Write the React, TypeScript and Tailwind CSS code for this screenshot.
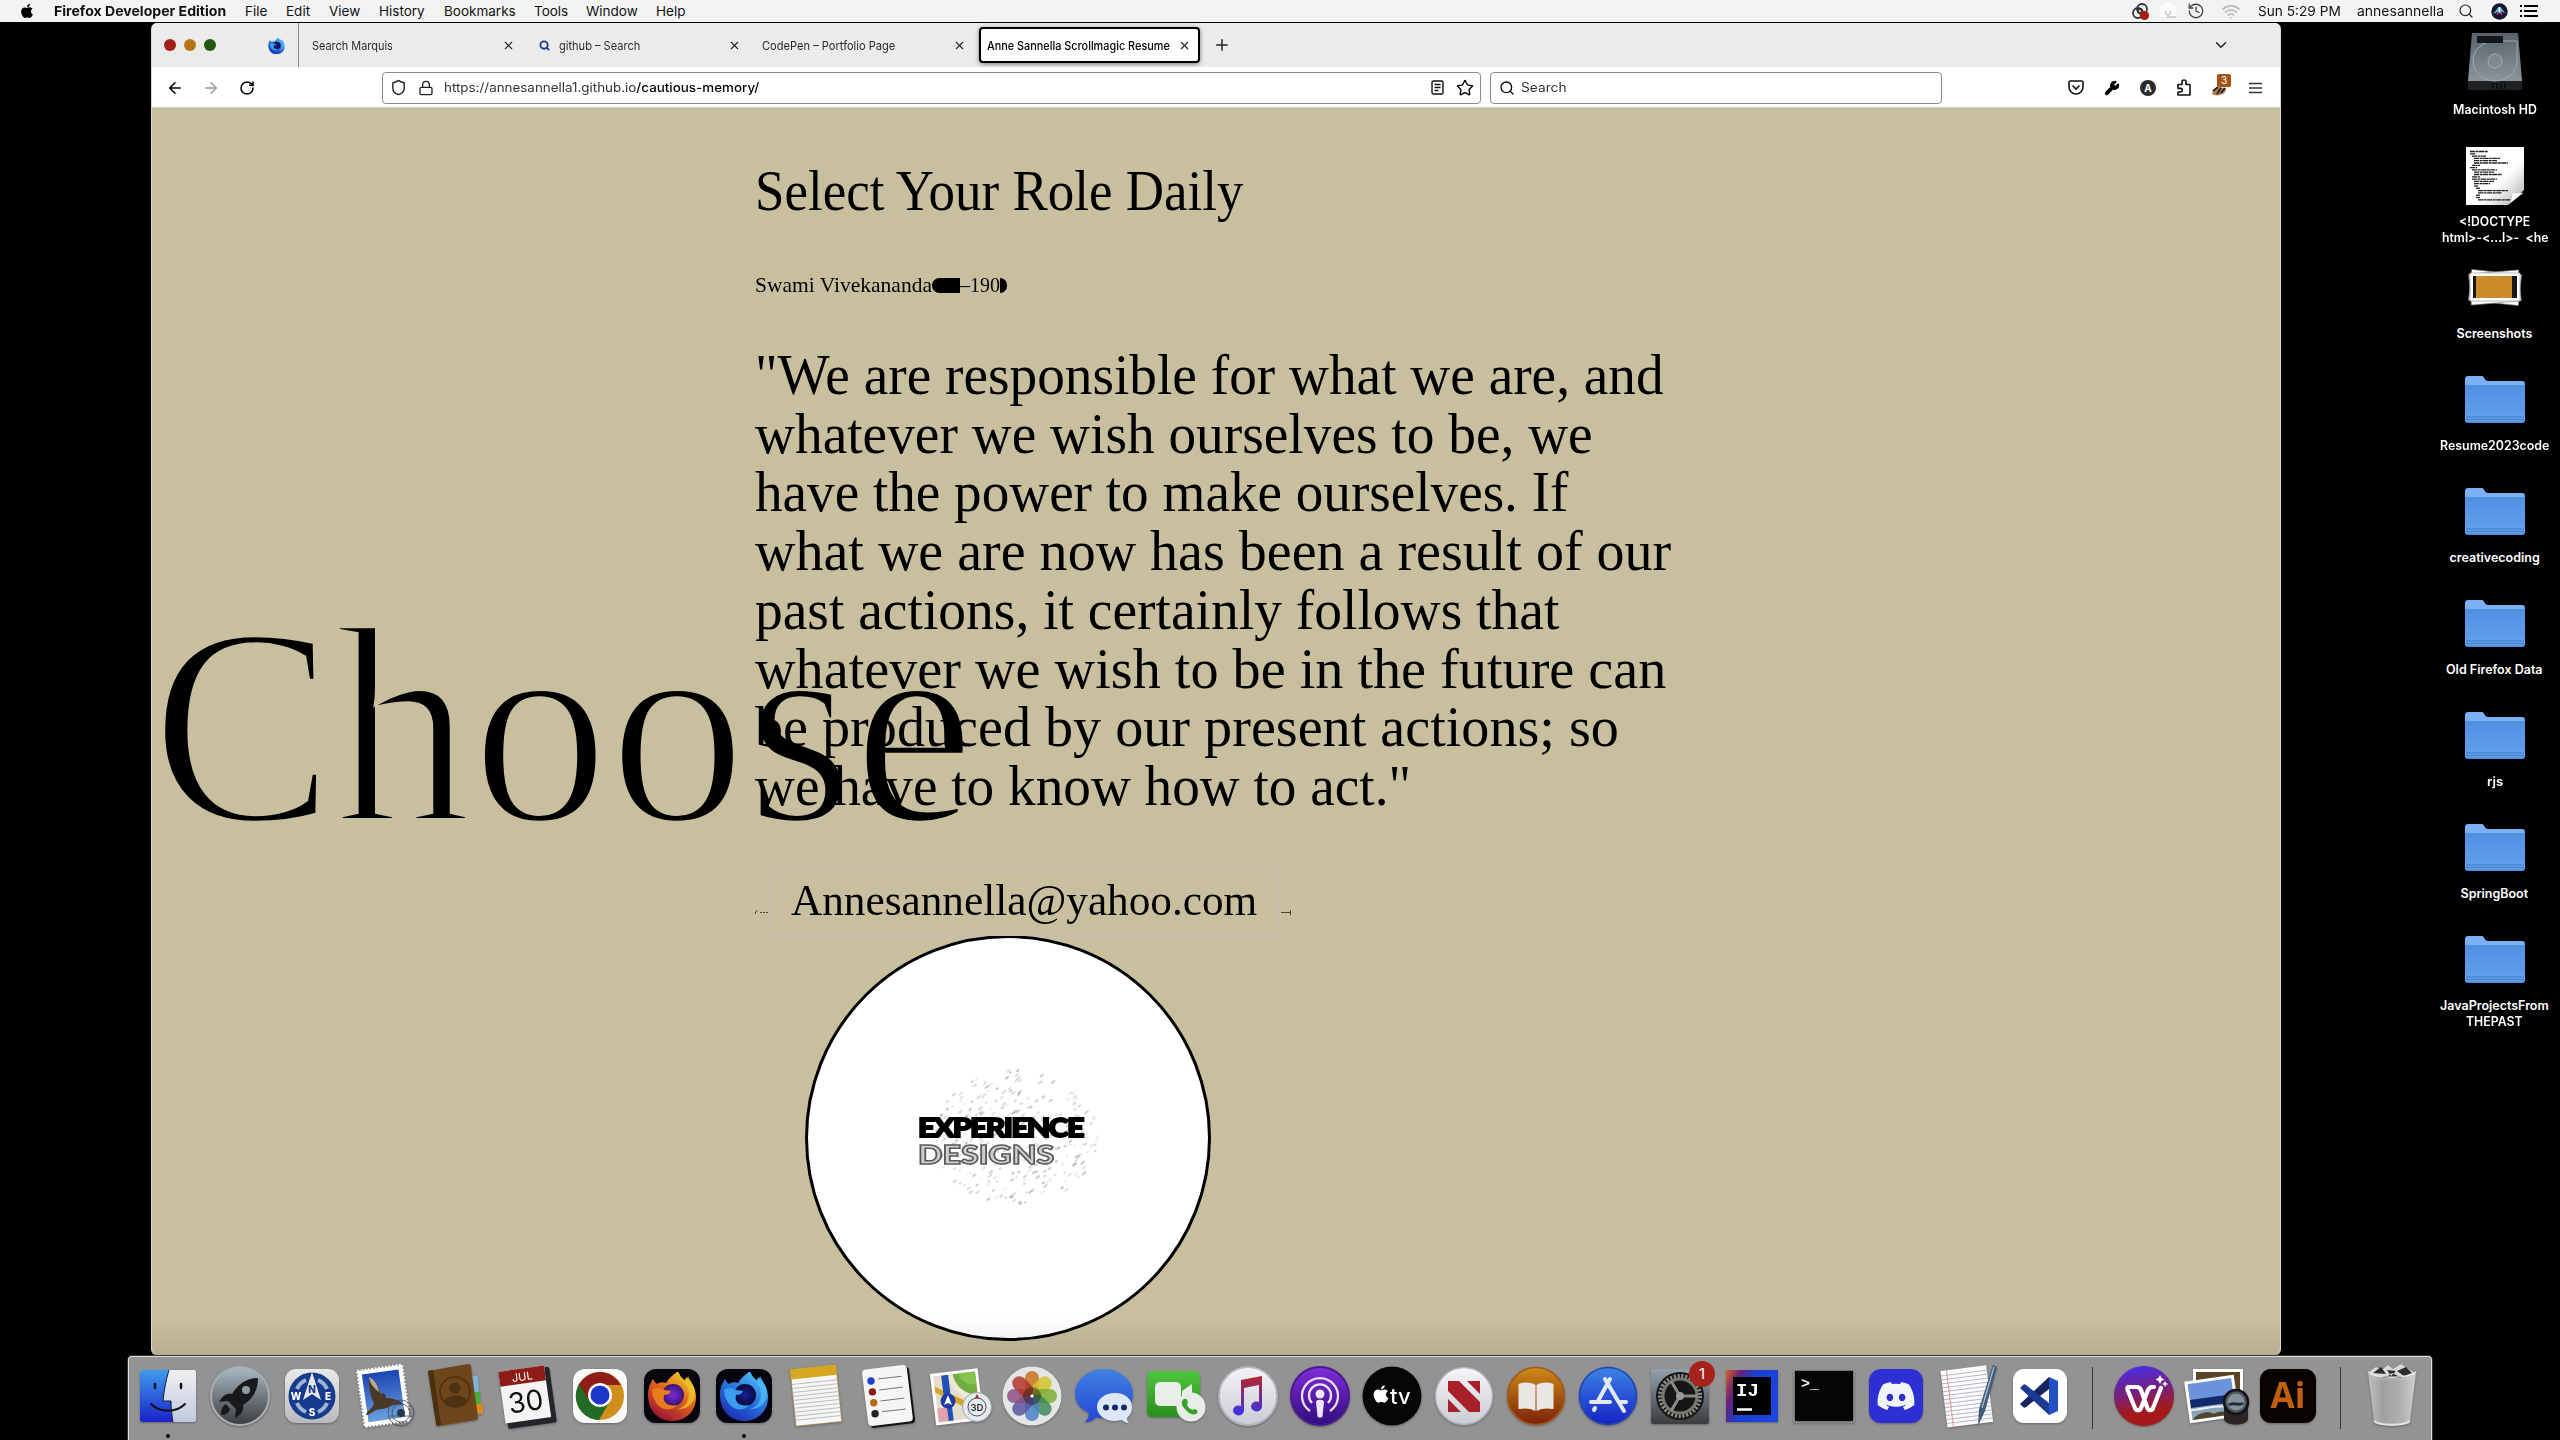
import React, { useLayoutEffect, useRef, useState } from "react";
import { FaApple, FaDiscord } from "react-icons/fa";
import {
  ArrowLeft,
  ArrowRight,
  ChevronDown,
  History,
  Lock,
  Plus,
  RotateCw,
  Search,
  Shield,
  Star,
  Wifi,
  Wrench,
  X,
} from "lucide-react";

/* Single line of text that is condensed or stretched to an exact width. */
function Fit({ w, className = "", children }: { w: number; className?: string; children: React.ReactNode }) {
  const ref = useRef<HTMLSpanElement>(null);
  const [scale, setScale] = useState(1);
  useLayoutEffect(() => {
    if (ref.current && ref.current.offsetWidth) setScale(w / ref.current.offsetWidth);
  }, [w]);
  return (
    <span className={`block shrink-0 whitespace-nowrap ${className}`} style={{ width: w }}>
      <span ref={ref} className="inline-block origin-left" style={{ transform: `scaleX(${scale})` }}>
        {children}
      </span>
    </span>
  );
}

function rng(seed: number) {
  let s = seed;
  return () => {
    s = (s * 16807) % 2147483647;
    return s / 2147483647;
  };
}

const MENU: [string, number, string][] = [
  ["File", 22, "ml-[19px]"],
  ["Edit", 24, "ml-[19px]"],
  ["View", 31, "ml-[19px]"],
  ["History", 46, "ml-[19px]"],
  ["Bookmarks", 72, "ml-[19px]"],
  ["Tools", 34, "ml-[18px]"],
  ["Window", 52, "ml-[18px]"],
  ["Help", 29, "ml-[18px]"],
];

function MenuBar() {
  return (
    <header className="flex h-[22px] items-center bg-[#f3f3f3] text-[13.5px] leading-[22px] text-[#111]">
      <FaApple className="ml-[19px] h-[16px] w-[16px] shrink-0 text-black" />
      <Fit w={172} className="ml-[19px] font-bold">Firefox Developer Edition</Fit>
      {MENU.map(([t, w, m]) => (
        <Fit key={t} w={w} className={m}>{t}</Fit>
      ))}
      <div className="ml-auto flex items-center pr-[22px]">
        <svg className="h-[20px] w-[22px]" viewBox="0 0 22 20">
          <g fill="none" stroke="#333" strokeWidth="1.800">
            <circle cx="8" cy="12" r="5" />
            <circle cx="12" cy="8" r="5" />
            <circle cx="10" cy="10" r="2" />
          </g>
          <circle cx="14.500" cy="14.500" r="4.600" fill="#a81e10" />
        </svg>
        <svg className="ml-[6px] h-[18px] w-[20px]" viewBox="0 0 20 18">
          <path d="M2 15h16v-6a7 7 0 0 0-16 0z" fill="#fcfcfc" />
          <path d="M8 9a2.500 2.500 0 1 0 4 0M9 15h9" fill="none" stroke="#aaa" />
        </svg>
        <History className="ml-[9px] h-[18px] w-[18px] text-[#444]" strokeWidth={1.7} />
        <Wifi className="ml-[15px] h-[19px] w-[22px] text-[#bbb]" strokeWidth={2.2} />
        <Fit w={83} className="ml-[16px]">Sun 5:29 PM</Fit>
        <Fit w={87} className="ml-[16px]">annesannella</Fit>
        <Search className="ml-[14px] h-[16px] w-[16px] text-[#222]" strokeWidth={1.8} />
        <svg className="ml-[17px] h-[17px] w-[17px]" viewBox="0 0 17 17">
          <circle cx="8.500" cy="8.500" r="8.200" fill="#18152f" />
          <path d="M2 10c3-1 4-6 6.500-6S12 9 15 10c-3 0-4.500-2-6.500-2S5 11 2 10z" fill="#3fd0e8" />
          <path d="M5 12c2-1 2-6 3.500-6s2 5 3.500 6c-2 0-2-2-3.500-2S7 12 5 12z" fill="#e95fc0" />
          <path d="M8.500 4v5" stroke="#fff" strokeWidth="1.500" />
        </svg>
        <svg className="ml-[12px] h-[12px] w-[18px]" viewBox="0 0 18 12" stroke="#000" strokeWidth="2">
          <path d="M0 1h2M0 6h2M0 11h2M4 1h14M4 6h13M4 11h14" />
        </svg>
      </div>
    </header>
  );
}

function Flame({ blue = false }: { blue?: boolean }) {
  const id = blue ? "fxb" : "fxo";
  return (
    <>
      <defs>
        <linearGradient id={id} x1="0.900" y1="0" x2="0.300" y2="1">
          <stop offset="0" stopColor={blue ? "#56c8fb" : "#f6dc2c"} />
          <stop offset="0.500" stopColor={blue ? "#2a76e0" : "#e0641c"} />
          <stop offset="1" stopColor={blue ? "#1a2fb4" : "#9a1237"} />
        </linearGradient>
        <radialGradient id={id + "g"}>
          <stop offset="0" stopColor={blue ? "#1a1f9a" : "#7a2de0"} />
          <stop offset="1" stopColor={blue ? "#060a3a" : "#3a1470"} />
        </radialGradient>
      </defs>
      <path d="M8 31c0-7 2-11 5-16 1 2 2 4 4 5 3-2 6-2 9-1 3-5 7-8 11-11 2-1 2 3 4 6l3 3c1-1 2-2 2-4 6 6 10 12 10 20 0 14-10 24-24 24S8 46 8 31z" fill={`url(#${id})`} />
      <circle cx="33" cy="31" r="11" fill={`url(#${id}g)`} />
      <path d="M12 26c4-3 9-2 12 0l7 1c-1 3-4 4-7 4-2 8 5 12 13 10-4 6-15 6-20-1-3-4-5-9-5-14z" fill={blue ? "#3b9bf0" : "#e87d1e"} />
      <path d="M38 8c0 9 11 10 11 22 0 8-5 14-12 15 11 1 18-7 18-16 0-8-5-12-7-17-1 2-1 4-2 5-3-2-6-5-8-9z" fill={blue ? "#4db8f8" : "#edc52a"} opacity="0.800" />
    </>
  );
}

function TabTitle({ children, w, className = "" }: { children: React.ReactNode; w: number; className?: string }) {
  return <Fit w={w} className={`pt-[2px] text-[12px] leading-[16px] text-[#2b2b2b] ${className}`}>{children}</Fit>;
}

function TabBar() {
  const close = "h-[13px] w-[13px] shrink-0 text-[#222]";
  return (
    <div className="flex h-[44px] items-center bg-[#ebebeb]">
      <div className="ml-[12px] flex gap-[8px]">
        <span className="h-[12px] w-[12px] rounded-full bg-[#a51f18]" />
        <span className="h-[12px] w-[12px] rounded-full bg-[#b67713]" />
        <span className="h-[12px] w-[12px] rounded-full bg-[#20590f]" />
      </div>
      <svg className="ml-[52px] h-[17px] w-[17px]" viewBox="7 6 50 50"><Flame blue /></svg>
      <div className="ml-[13px] h-full w-px bg-[#8a8a8a]" />
      <TabTitle w={81} className="ml-[13px]">Search Marquis</TabTitle>
      <X className={`${close} ml-[109px]`} strokeWidth={2} />
      <Search className="ml-[24px] h-[11px] w-[11px] text-[#1d3a94]" strokeWidth={4} />
      <TabTitle w={81} className="ml-[9px]">github – Search</TabTitle>
      <X className={`${close} ml-[88px]`} strokeWidth={2} />
      <TabTitle w={133} className="ml-[21px]">CodePen – Portfolio Page</TabTitle>
      <X className={`${close} ml-[58px]`} strokeWidth={2} />
      <div className="ml-[13px] flex h-[36px] w-[221px] items-center rounded-[4px] border-2 border-black bg-white shadow-[0_1px_4px_rgba(0,0,0,0.5)]">
        <Fit w={183} className="ml-[6px] pt-[2px] text-[12px] leading-[16px] font-medium text-black">Anne Sannella Scrollmagic Resume</Fit>
        <X className={`${close} ml-[8px]`} strokeWidth={2} />
      </div>
      <Plus className="ml-[13px] h-[18px] w-[18px] text-[#222]" strokeWidth={1.9} />
      <ChevronDown className="mr-[50px] ml-auto h-[18px] w-[18px] text-[#222]" strokeWidth={2} />
    </div>
  );
}

function Toolbar() {
  return (
    <div className="flex h-[41px] items-center border-b border-[#cfcfd4] bg-white pt-px text-[12.5px] leading-[18px] text-[#333]">
      <ArrowLeft className="ml-[14px] h-[18px] w-[18px] text-black" strokeWidth={2} />
      <ArrowRight className="ml-[18px] h-[18px] w-[18px] text-[#9a9a9a]" strokeWidth={2} />
      <RotateCw className="ml-[19px] h-[16px] w-[16px] text-black" strokeWidth={2.3} />
      <div className="ml-[127px] flex h-[32px] w-[1099px] items-center rounded-[4px] border border-[#8a8a90]">
        <Shield className="ml-[7px] h-[17px] w-[17px] text-[#222]" strokeWidth={2} />
        <Lock className="ml-[11px] h-[16px] w-[16px] text-[#222]" strokeWidth={2} />
        <Fit w={315} className="ml-[10px]">
          https://annesannella1.github.io<span className="font-medium text-black">/cautious-memory/</span>
        </Fit>
        <svg className="ml-auto h-[15px] w-[13px]" viewBox="0 0 13 15" fill="none" stroke="#111" strokeWidth="1.400">
          <rect x="1" y="1" width="11" height="13" rx="1.500" />
          <path d="M3.500 4.500h6M3.500 7.500h6M3.500 10.500h4" />
        </svg>
        <Star className="mr-[6px] ml-[12px] h-[18px] w-[18px] text-black" strokeWidth={1.9} />
      </div>
      <div className="ml-[9px] flex h-[32px] w-[452px] items-center rounded-[4px] border border-[#8a8a90]">
        <Search className="ml-[8px] h-[16px] w-[16px] text-black" strokeWidth={2} />
        <Fit w={45} className="ml-[6px]">Search</Fit>
      </div>
      <div className="mr-[17px] ml-auto flex items-center">
        <svg className="h-[15px] w-[16px]" viewBox="0 0 16 15" fill="none" stroke="#111" strokeWidth="1.600">
          <path d="M1 2.500C1 1.700 1.500 1 2.300 1h11.400c.8 0 1.300.7 1.300 1.500V7a7 7 0 0 1-14 0z" />
          <path d="M4.500 5.500 8 9l3.500-3.500" />
        </svg>
        <Wrench className="ml-[20px] h-[16px] w-[16px] fill-black text-black" strokeWidth={1.6} />
        <span className="ml-[20px] flex h-[16px] w-[16px] items-center justify-center rounded-full bg-[#2a2a2a] text-[10px] font-bold text-white">A</span>
        <svg className="ml-[20px] h-[17px] w-[16px]" viewBox="0 0 16 17" fill="none" stroke="#111" strokeWidth="1.600" strokeLinejoin="round">
          <path d="M2 5.500h4V3a2 2 0 0 1 4 0v2.500h4V16H2v-3h2.500a1.800 1.800 0 0 0 0-3.600H2z" />
        </svg>
        <div className="relative ml-[19px] h-[18px] w-[20px]">
          <svg className="h-[18px] w-[20px]" viewBox="0 0 20 18">
            <path d="M1 15c1-4 3-6 6-7l8 1c0 4-2 6-6 7-3 1-6 0-8-1z" fill="#b07a4c" />
            <path d="M2 12 7 8M6 15l4-6M10 14l4-5" stroke="#222" strokeWidth="1.800" />
          </svg>
          <span className="absolute -top-[5px] left-[6px] h-[13px] w-[14px] rounded-[2px] bg-[#a35312] text-center text-[10px] leading-[13px] text-white">3</span>
        </div>
        <svg className="ml-[18px] h-[12px] w-[14px]" viewBox="0 0 14 12" stroke="#333" strokeWidth="1.300">
          <path d="M0 1.500h13M0 6h13M0 10.500h13" />
        </svg>
      </div>
    </div>
  );
}

const QUOTE: [string, number][] = [
  ['"We are responsible for what we are, and', 909],
  ["whatever we wish ourselves to be, we", 838],
  ["have the power to make ourselves. If", 813],
  ["what we are now has been a result of our", 916],
  ["past actions, it certainly follows that", 804],
  ["whatever we wish to be in the future can", 911],
  ["be produced by our present actions; so", 864],
  ['we have to know how to act."', 656],
];

function Logo() {
  const r = rng(77);
  const marks = Array.from({ length: 330 }, () => {
    const a = r() * Math.PI * 2;
    const d = Math.sqrt(r());
    return { x: 97 + Math.cos(a) * d * 82, y: 70 + Math.sin(a) * d * 67, l: 0.5 + r() * 2.5, o: 0.06 + r() * 0.22 };
  });
  return (
    <div className="relative ml-[4px] h-[140px] w-[184px]">
      <svg className="h-[140px] w-[184px]" viewBox="0 0 184 140">
        {marks.map((m, i) => (
          <path key={i} d={`M${m.x} ${m.y}l${m.l} ${-m.l * 0.8}`} stroke="#333" strokeOpacity={m.o} strokeWidth="2" strokeLinecap="round" />
        ))}
      </svg>
      <div className="absolute top-[46px] left-0 font-['Lato',sans-serif] text-[26px] leading-[27px] font-black">
        <Fit w={165} className="tracking-[-1.5px] text-black [-webkit-text-stroke:1.8px_#000]">EXPERIENCE</Fit>
        <Fit w={136} className="text-[#d0d0d0] [-webkit-text-stroke:1.500px_#5a5a5a]">DESIGNS</Fit>
      </div>
    </div>
  );
}

function Page() {
  return (
    <main className="relative flex-1 overflow-hidden bg-[#c8bf9f] pt-[54px] pl-[603px] font-['Liberation_Serif',serif] text-black">
      <div className="absolute top-[479px] -left-[1px] text-[282px] leading-[278px] [-webkit-text-stroke:6px_#c8bf9f]">
        <Fit w={824}>Choose</Fit>
      </div>
      <div className="relative">
        <h1 className="text-[56px] leading-[59px]"><Fit w={488}>Select Your Role Daily</Fit></h1>
        <div className="mt-[52px] flex h-[24px] text-[22px] leading-[24px]">
          <Fit w={177}>Swami Vivekananda</Fit>
          <span className="mt-[5px] h-[15px] w-[28px] rounded-l-full bg-black text-[11px] leading-[15px]">(1863</span>
          <Fit w={40}>–190</Fit>
          <span className="mt-[5px] h-[15px] w-[7px] rounded-r-full bg-black text-[11px] leading-[15px]">)</span>
        </div>
        <blockquote className="mt-[49px] text-[57px] leading-[58.7px]">
          {QUOTE.map(([t, w]) => <Fit key={t} w={w}>{t}</Fit>)}
        </blockquote>
        <div className="mt-[51px] flex h-[69px] items-center">
          <svg className="mt-[22px] h-[6px] w-[15px]" viewBox="0 0 15 6" stroke="#4a4738" fill="none"><path d="M.5 5V2h3M5 3.500h8" strokeDasharray="2 1" /></svg>
          <div className="flex h-[69px] w-[509px] items-center border border-[#bcbab4] pl-[20px]">
            <Fit w={466} className="text-[44px] leading-[60px]">Annesannella@yahoo.com</Fit>
          </div>
          <svg className="mt-[22px] ml-[2px] h-[6px] w-[11px]" viewBox="0 0 11 6" stroke="#4a4738" fill="none"><path d="M0 3.500h9M9.500 1v5" /></svg>
        </div>
        <div className="-mt-px ml-[50px] flex h-[406px] w-[406px] items-center justify-center rounded-full border-3 border-black bg-white">
          <Logo />
        </div>
      </div>
      <div className="absolute inset-x-0 bottom-0 h-[40px] bg-linear-to-b from-transparent to-black/8" />
    </main>
  );
}

function HardDrive() {
  return (
    <svg className="h-[58px] w-[58px]" viewBox="0 0 58 58">
      <defs>
        <linearGradient id="hd" x1="0" y1="0" x2="0" y2="1"><stop offset="0" stopColor="#58626a" /><stop offset="1" stopColor="#8c959a" /></linearGradient>
      </defs>
      <path d="M6 1h46l4 48v7c0 1-1 2-2 2H4c-1 0-2-1-2-2v-7z" fill="#202224" />
      <path d="M6 1h46l4 48H2z" fill="url(#hd)" />
      <path d="M29 9h22v20a22 20 0 1 1-22-20z" fill="none" stroke="#a0a9ae" />
      <circle cx="29" cy="29" r="7" fill="#7f898f" stroke="#a2acb1" />
      <rect x="11" y="4" width="26" height="7" fill="#15181a" />
      <path d="M27 51v6M31 51v6M35 51v6M39 51v6" stroke="#000" />
    </svg>
  );
}

function DocIcon() {
  const lines: [number, number][] = [[4, 18], [4, 6], [6, 14], [8, 26], [8, 23], [8, 34], [6, 8], [4, 7], [6, 25], [8, 20], [8, 28], [6, 8], [6, 25], [8, 20], [8, 16], [8, 4], [10, 4], [12, 30], [12, 24], [10, 4], [10, 4], [12, 34]];
  return (
    <svg className="mt-[6px] h-[58px] w-[58px]" viewBox="0 0 58 58">
      <defs><linearGradient id="dc" x1="0" y1="0" x2="1" y2="1"><stop offset="0.600" stopColor="#fff" /><stop offset="1" stopColor="#aaa" /></linearGradient></defs>
      <path d="M0 0h58v43L42 58H0z" fill="url(#dc)" />
      {lines.map(([x, w], i) => <path key={i} d={`M${x} ${4.500 + i * 2.300}h${w}`} stroke="#222" strokeWidth="1.300" strokeDasharray="5 .6 3 .5" />)}
      <path d="M46 46h11L43 57c2-3 3-6 3-11z" fill="#fff" stroke="#bbb" strokeWidth=".5" />
    </svg>
  );
}

function ShotsIcon() {
  return (
    <svg className="mt-[6px] h-[40px] w-[58px]" viewBox="0 0 58 40">
      <rect x="4" y="4" width="50" height="31" fill="#fff" stroke="#888" strokeWidth=".6" transform="rotate(6 29 20)" />
      <rect x="4" y="4" width="50" height="31" fill="#fff" stroke="#888" strokeWidth=".6" transform="rotate(-5 29 20)" />
      <rect x="4" y="5" width="50" height="28" fill="#fff" stroke="#888" strokeWidth=".6" />
      <rect x="7" y="8" width="44" height="22" fill="#151515" />
      <rect x="10" y="8" width="36" height="22" fill="#cd8c2b" />
    </svg>
  );
}

function Folder() {
  return (
    <svg className="mt-[6px] h-[48px] w-[60px]" viewBox="0 0 60 48">
      <defs><linearGradient id="fd" x1="0" y1="0" x2="0" y2="1"><stop offset="0" stopColor="#4f8ee2" /><stop offset="1" stopColor="#66a4f0" /></linearGradient></defs>
      <path d="M0 3c0-2 1-3 3-3h14c2 0 3 5 6 5h34c2 0 3 1 3 3v10H0z" fill="#7cb0f4" />
      <path d="M0 9h60v35c0 2-1 3-3 3H3c-2 0-3-1-3-3z" fill="url(#fd)" />
      <path d="M1 41h58M1 43.500h58M1 46h58" stroke="#3d78c6" strokeWidth=".9" />
    </svg>
  );
}

const FILES: { icon: React.ReactNode; lines: [string, number][] }[] = [
  { icon: <HardDrive />, lines: [["Macintosh HD", 84]] },
  { icon: <DocIcon />, lines: [["<!DOCTYPE", 71], ["html>-<...l>-  <he", 106]] },
  { icon: <ShotsIcon />, lines: [["Screenshots", 76]] },
  { icon: <Folder />, lines: [["Resume2023code", 109]] },
  { icon: <Folder />, lines: [["creativecoding", 90]] },
  { icon: <Folder />, lines: [["Old Firefox Data", 97]] },
  { icon: <Folder />, lines: [["rjs", 16]] },
  { icon: <Folder />, lines: [["SpringBoot", 68]] },
  { icon: <Folder />, lines: [["JavaProjectsFrom", 109], ["THEPAST", 57]] },
];

function Desktop() {
  return (
    <aside className="flex w-[131px] flex-col pt-[7px]">
      {FILES.map((f, i) => (
        <div key={i} className="flex h-[112px] flex-col items-center">
          <div className="flex h-[64px] items-center justify-center">{f.icon}</div>
          <div className="mt-[9px] flex flex-col items-center text-[12.5px] leading-[16px] font-semibold text-white">
            {f.lines.map(([t, w]) => <Fit key={t} w={w} className="whitespace-pre">{t}</Fit>)}
          </div>
        </div>
      ))}
    </aside>
  );
}

function Grad({ id, a, b }: { id: string; a: string; b: string }) {
  return <linearGradient id={id} x1="0" y1="0" x2="0" y2="1"><stop offset="0" stopColor={a} /><stop offset="1" stopColor={b} /></linearGradient>;
}

const INTER = "Inter, sans-serif";

const APPS: React.ReactNode[] = [
  /* Finder */
  <g key="finder">
    <Grad id="fi" a="#3f9bec" b="#1a22cc" /><Grad id="fi2" a="#f0f0f2" b="#bfc8de" />
    <rect x="4" y="6" width="56" height="52" rx="2" fill="url(#fi2)" />
    <path d="M6 6h27c-3 10-5 20-6 31h8c0 8 1 15 2 21H6c-1 0-2-1-2-2V8c0-1 1-2 2-2z" fill="url(#fi)" />
    <path d="M33 6c-3 10-5 20-6 31h8c0 8 1 15 2 21" fill="none" stroke="#123" strokeWidth="1" />
    <path d="M19 20v4M45 20v4" stroke="#111" strokeWidth="2.500" strokeLinecap="round" />
    <path d="M15 40c9 9 25 9 34 0" fill="none" stroke="#111" strokeWidth="2" strokeLinecap="round" />
  </g>,
  /* Launchpad */
  <g key="launch">
    <Grad id="la" a="#a9bac4" b="#3a3c3e" />
    <circle cx="32" cy="32" r="29" fill="url(#la)" stroke="#a7afb4" strokeWidth="2" />
    <path d="M50 14c-11 0-20 6-26 16-5-1-9 1-13 8l9-1 8 8-1 9c7-4 9-8 8-13 10-6 15-15 15-27z" fill="#17191b" />
    <path d="M18 40c-4 2-5 6-5 11 5 0 8-2 9-6z" fill="#17191b" />
    <circle cx="38" cy="26" r="4" fill="#8e9aa1" />
  </g>,
  /* Compass */
  <g key="compass">
    <Grad id="co" a="#e9e9ea" b="#b9b9bb" />
    <rect x="5" y="5" width="54" height="54" rx="11" fill="url(#co)" />
    <circle cx="32" cy="32" r="23.500" fill="#173b8c" />
    <g fill="none" stroke="#9db3d6" strokeWidth="4">
      <path d="M38 16a17 17 0 0 1 9 9M47 39a17 17 0 0 1-9 9M26 48a17 17 0 0 1-9-9M17 25a17 17 0 0 1 9-9" />
    </g>
    <path d="M32 8 23 36l9-6 9 6z" fill="#e8e8e8" />
    <g fontFamily={INTER} fontWeight="800" fontSize="10" textAnchor="middle" fill="#fff">
      <text x="32" y="29" fill="#173b8c">N</text><text x="16" y="36">W</text><text x="48" y="36">E</text><text x="32" y="52">S</text>
    </g>
  </g>,
  /* Mail stamp */
  <g key="mail">
    <g transform="rotate(-8 30 32)">
      <rect x="9" y="4" width="45" height="56" fill="#fff" stroke="#fff" strokeWidth="2.500" strokeDasharray="2 1.500" />
      <Grad id="ma" a="#1c45b4" b="#6ba0dd" />
      <rect x="13" y="8" width="37" height="48" fill="url(#ma)" />
    </g>
    <path d="M17 13c6 2 10 9 11 17 4-2 6 0 6 4 7 0 14 2 18 7-6-2-10 0-14 1-4 4-12 2-16 5-3 2-5 4-8 4 1-5 7-6 8-12-4-8-5-14-5-26z" fill="#4b3926" />
    <path d="M17 13c5 2 9 8 10 15-5-4-9-8-10-15z" fill="#b7aa98" />
    <g fill="none" stroke="#444a5a" opacity=".8"><circle cx="49" cy="49" r="13" /><circle cx="49" cy="49" r="9" /><path d="M38 52h22" /></g>
    <circle cx="49" cy="49" r="4" fill="#2a3448" />
  </g>,
  /* Contacts */
  <g key="contacts">
    <path d="M48 12h6l2 34-6 2z" fill="#7fb5d8" /><path d="M50 28h6v12h-6z" fill="#48a83c" /><path d="M51 40h8v10h-8z" fill="#d98920" />
    <path d="M4 7 44 0c2 0 3 1 3 3l7 50c0 2-1 3-2 3l-37 6c-2 0-3-1-3-3z" fill="#6d471b" />
    <path d="M4 7 9 6l8 55-3 1c-2 0-2-1-2-3z" fill="#4b2f10" />
    <circle cx="31" cy="28" r="15" fill="none" stroke="#4c3212" strokeWidth="1.500" />
    <circle cx="31" cy="24" r="5.500" fill="#4c3212" /><path d="M20 38c2-8 20-9 23-1-5 7-17 8-23 1z" fill="#4c3212" />
  </g>,
  /* Calendar */
  <g key="cal" transform="rotate(-8 32 32)">
    <rect x="8" y="6" width="49" height="56" rx="2" fill="#22262a" />
    <rect x="6" y="4" width="46" height="52" fill="#f4f4f4" />
    <rect x="6" y="4" width="46" height="15" fill="#8e1c16" />
    <g fontFamily={INTER} textAnchor="middle"><text x="29" y="16" fontSize="11" fill="#fff">JUL</text><text x="29" y="47" fontSize="28" fill="#111">30</text></g>
  </g>,
  /* Chrome */
  <g key="chrome">
    <rect x="5" y="5" width="54" height="54" rx="12" fill="#fafafa" />
    <circle cx="32" cy="32" r="24" fill="#d08e1c" />
    <path d="M32 32 11 20a24 24 0 0 0 20 36l11-19z" fill="#226a26" />
    <path d="M11 20a24 24 0 0 1 42 1H32L22 38z" fill="#8f1e17" />
    <circle cx="32" cy="31" r="12" fill="#fff" /><circle cx="32" cy="31" r="9.500" fill="#1d35c9" />
  </g>,
  <g key="ff"><rect x="4" y="5" width="56" height="54" rx="12" fill="#08050f" /><Flame /></g>,
  <g key="ffd"><rect x="4" y="5" width="56" height="54" rx="12" fill="#050510" /><Flame blue /></g>,
  /* Notes */
  <g key="notes" transform="rotate(-6 32 32)">
    <rect x="9" y="3" width="46" height="57" fill="#f6f6f6" stroke="#9a7e2a" strokeWidth=".6" />
    <rect x="9" y="3" width="46" height="10" fill="#d5a61f" />
    <path d="M9 18h46M9 22h46M9 26h46M9 30h46M9 34h46M9 38h46M9 42h46M9 46h46M9 50h46M9 54h46" stroke="#bbb" />
  </g>,
  /* Reminders */
  <g key="rem" transform="rotate(-7 32 32)">
    <rect x="11" y="5" width="45" height="57" rx="4" fill="#111" /><rect x="9" y="3" width="45" height="57" rx="4" fill="#f5f5f5" />
    <circle cx="17" cy="15" r="3.700" fill="#213fd0" /><circle cx="17" cy="26" r="3.700" fill="#8a1f1a" /><circle cx="17" cy="37" r="3.700" fill="#b56a18" /><circle cx="17" cy="48" r="3.700" fill="#222" />
    <path d="M24 14h24M24 25h24M24 36h24M24 47h24" stroke="#777" />
  </g>,
  /* Maps */
  <g key="maps">
    <g transform="rotate(-7 28 34)">
      <rect x="5" y="7" width="48" height="52" fill="#fff" /><rect x="8" y="10" width="42" height="46" fill="#e4ddcb" />
      <path d="M25 10h25v26C36 34 26 24 25 10z" fill="#6fae3f" /><path d="M33 10h17v13c-9 0-15-5-17-13z" fill="#86c44f" />
      <path d="M25 10c1 14 11 24 25 26" fill="none" stroke="#efe9da" strokeWidth="5" />
      <path d="M8 26l42 28v-8L8 20z" fill="#d9a32a" /><path d="M16 10h7v46h-7z" fill="#2350b5" /><path d="M8 42h10v14H8z" fill="#e0a3ac" />
    </g>
    <circle cx="20" cy="37" r="7.500" fill="#1d3ba5" /><path d="m20 31-4 10 4-2 4 2z" fill="#fff" />
    <circle cx="49" cy="43" r="14.500" fill="#e6e9ec" stroke="#9aa" /><circle cx="49" cy="43" r="9" fill="none" stroke="#35566f" />
    <text x="49" y="46.500" fontFamily={INTER} fontSize="9.500" fontWeight="600" textAnchor="middle" fill="#222">3D</text><path d="m49 30-2 4h4z" fill="#a22" />
  </g>,
  /* Photos */
  <g key="photos">
    <circle cx="32" cy="32" r="29.500" fill="#e4e6e6" />
    {["#c9701f", "#d3c32c", "#7fae35", "#3f8a54", "#4b7fc4", "#5b55a0", "#8c4f82", "#b0362a"].map((c, i) => (
      <rect key={c} x="25" y="7" width="14" height="24" rx="7" fill={c} opacity=".85" transform={`rotate(${i * 45} 32 32)`} />
    ))}
    <circle cx="32" cy="32" r="9" fill="#26201c" opacity=".45" /><circle cx="32" cy="32" r="1.600" fill="#fff" />
  </g>,
  /* Messages */
  <g key="msg">
    <Grad id="ms" a="#4580e2" b="#2147d6" />
    <path d="M32 5c16 0 29 11 29 25S48 54 32 54c-3 0-6 0-8-1-2 3-6 5-11 5 3-3 4-6 4-9C8 45 3 38 3 30 3 16 16 5 32 5z" fill="url(#ms)" />
    <path d="M43 29c10 0 17 6 17 14 0 5-2 8-5 11 0 2 1 4 2 5-3 0-5-1-7-3l-7 1c-10 0-18-6-18-14s8-14 18-14z" fill="#dce8f8" />
    <g fill="#142a66"><circle cx="34" cy="43.500" r="3" /><circle cx="43" cy="43.500" r="3" /><circle cx="52" cy="43.500" r="3" /></g>
  </g>,
  /* FaceTime */
  <g key="ft">
    <Grad id="ft" a="#4fc43f" b="#2b8f1d" />
    <rect x="3" y="7" width="53" height="46" rx="5" fill="url(#ft)" /><rect x="11" y="18" width="26" height="24" rx="5" fill="#e9eee8" /><path d="m38 27 10-7v20l-10-7z" fill="#e9eee8" />
    <circle cx="47" cy="43" r="14.500" fill="#e6ece6" />
    <path d="M40 35c2-1 3 0 4 3l-1 3c1 2 3 4 5 5l3-1c3 1 3 3 2 4-3 3-8 1-12-4-4-4-4-8-1-10z" fill="#37a026" />
  </g>,
  /* Music */
  <g key="music">
    <Grad id="mu" a="#f4f4f6" b="#c8ccd4" />
    <defs><linearGradient id="mn" gradientUnits="userSpaceOnUse" x1="0" y1="12" x2="0" y2="50"><stop offset="0" stopColor="#b8242a" /><stop offset=".5" stopColor="#7a2c80" /><stop offset="1" stopColor="#3f30e8" /></linearGradient></defs>
    <circle cx="32" cy="32" r="29" fill="url(#mu)" stroke="#b3b6bf" strokeWidth="2" />
    <path d="M25 16l21-4v31a5.500 5 0 1 1-3-5V21l-15 3v23a5.500 5 0 1 1-3-5z" fill="url(#mn)" />
  </g>,
  /* Podcasts */
  <g key="pod">
    <Grad id="po" a="#7f2cd8" b="#320e7c" />
    <circle cx="32" cy="32" r="29" fill="url(#po)" stroke="#4a1a90" strokeWidth="2" />
    <g fill="none" stroke="#e9def6" strokeWidth="2.300"><path d="M22 47a18 18 0 1 1 20 0" /><path d="M24 39a11 11 0 1 1 16 0" /></g>
    <circle cx="32" cy="30" r="4.500" fill="#efe6fa" /><path d="M28 38c0-3 8-3 8 0l-1.500 14c0 2-5 2-5 0z" fill="#efe6fa" />
  </g>,
  /* TV */
  <g key="tv">
    <circle cx="32" cy="32" r="29.500" fill="#060606" /><FaApple x={11} y={20} size={20} color="#fff" />
    <text x="30" y="40" fontFamily={INTER} fontSize="22" fontWeight="500" fill="#fff">tv</text>
  </g>,
  /* News */
  <g key="news">
    <Grad id="ne" a="#f6f6f8" b="#c9ccd4" /><circle cx="32" cy="32" r="28.500" fill="url(#ne)" stroke="#aeb2bb" strokeWidth="1.500" />
    <path d="M16 17h11l21 21v10H37L16 27zM35 17h13v13zM16 35l13 13H16z" fill="#a92029" />
  </g>,
  /* Books */
  <g key="books">
    <Grad id="bo" a="#cd8a18" b="#7d2108" /><circle cx="32" cy="32" r="28.500" fill="url(#bo)" stroke="#a5561a" strokeWidth="1.500" />
    <path d="M31.500 21c-5-3-11-3-17-1v25c6-1 12-1 17 2zM32.500 21c5-3 11-3 17-1v25c-6-1-12-1-17 2z" fill="#e9e7e4" />
  </g>,
  /* App Store */
  <g key="store">
    <Grad id="as" a="#3b84e6" b="#1722c4" /><circle cx="32" cy="32" r="28.500" fill="url(#as)" stroke="#2145b4" strokeWidth="1.500" />
    <g stroke="#e2e9f4" strokeWidth="4" strokeLinecap="round"><path d="M34 15 22 37M29 15l19 32M15 38h19M44 38h6M19 44l-1 2" /></g>
  </g>,
  /* System settings */
  <g key="sys">
    <Grad id="sy" a="#93a2ae" b="#3b3c3d" /><rect x="3" y="5" width="58" height="55" rx="2" fill="url(#sy)" />
    <circle cx="32" cy="32" r="24" fill="#161616" /><circle cx="32" cy="32" r="20" fill="none" stroke="#8b8b86" strokeWidth="4" strokeDasharray="2.200 1.600" />
    <circle cx="32" cy="32" r="17" fill="none" stroke="#77776f" strokeWidth="3" />
    <path d="M32 32h17M32 32l-9-15M32 32l-9 15" stroke="#8b8b86" strokeWidth="3" /><circle cx="32" cy="32" r="4" fill="#999" />
  </g>,
  /* IntelliJ */
  <g key="ij">
    <defs><linearGradient id="ij" x1="0" y1="0" x2="1" y2=".4"><stop offset="0" stopColor="#d8631f" /><stop offset=".25" stopColor="#6a1f78" /><stop offset=".5" stopColor="#1a3fd0" /><stop offset="1" stopColor="#1b45e0" /></linearGradient></defs>
    <rect x="6" y="6" width="52" height="52" fill="url(#ij)" /><rect x="13" y="13" width="38" height="38" fill="#000" />
    <text x="16" y="32" fontFamily="Liberation Mono, monospace" fontWeight="700" fontSize="19" fill="#fff">IJ</text><path d="M17 45.500h15" stroke="#fff" strokeWidth="2.500" />
  </g>,
  /* Terminal */
  <g key="term">
    <rect x="2" y="6" width="60" height="52" rx="2" fill="#050505" stroke="#8e969c" strokeWidth="1.500" />
    <text x="9" y="24" fontFamily="Liberation Mono, monospace" fontWeight="700" fontSize="15" fill="#eee">{">_"}</text>
  </g>,
  /* Discord */
  <g key="disc"><rect x="5" y="5" width="54" height="54" rx="12" fill="#2d2fd2" /><FaDiscord x={12} y={12} size={40} color="#f2f4fb" /></g>,
  /* TextEdit */
  <g key="te">
    <g transform="rotate(-7 30 34)"><rect x="8" y="4" width="46" height="57" fill="#fafafa" /><path d="M8 9h46M8 13h46M8 17h46M8 21h46M8 25h46M8 29h46M8 33h46M8 37h46M8 41h46M8 45h46M8 49h46M8 53h46M8 57h46" stroke="#aab" strokeWidth=".8" /><path d="M14 4v57" stroke="#d88" strokeWidth=".8" /></g>
    <path d="M57 1l4 2-12 44-7 15 1-17z" fill="#3f5b78" /><path d="M58 3 46 44" stroke="#a9c0d4" strokeWidth="1.300" />
  </g>,
  /* VS Code */
  <g key="vsc">
    <rect x="5" y="5" width="54" height="54" rx="11" fill="#fff" />
    <path d="M12 40 41 13v12L18 43c-1 1-2 1-3 0l-3-3z" fill="#14245e" /><path d="M12 24l3-3c1-1 2-1 3 0l23 18v12z" fill="#1c3a92" /><path d="m41 13 9 4v30l-9 4z" fill="#2450c4" />
  </g>,
];

const EXTRAS: React.ReactNode[] = [
  /* AI writer */
  <g key="wr">
    <defs><linearGradient id="wr" x1=".4" y1="0" x2=".6" y2="1"><stop offset="0" stopColor="#4a2ee6" /><stop offset=".45" stopColor="#7a1f74" /><stop offset=".75" stopColor="#a41a1c" /></linearGradient></defs>
    <circle cx="32" cy="32" r="30" fill="url(#wr)" />
    <path d="M16 23h9c2 0 3 1 4 3l6 17c1 4 5 4 6 1l8-20M16 23c-1 1-1 2 0 4l7 17c1 3 5 3 6 0l7-18c1-2 2-3 4-3h2" fill="none" stroke="#fff" strokeWidth="4.200" strokeLinejoin="round" strokeLinecap="round" />
    <path d="m48 11 1.500 3 3 1.500-3 1.500-1.500 3-1.500-3-3-1.500 3-1.500zM53 17l1 2 2 1-2 1-1 2-1-2-2-1 2-1z" fill="#fff" />
  </g>,
  /* Preview */
  <g key="pv">
    <rect x="9" y="5" width="50" height="40" fill="#fff" /><rect x="12" y="8" width="44" height="34" fill="#5b4424" />
    <g transform="rotate(-8 28 36)"><rect x="3" y="14" width="50" height="42" fill="#fff" /><rect x="6" y="17" width="44" height="17" fill="#6a93dc" /><rect x="6" y="33" width="44" height="9" fill="#12296b" /><rect x="6" y="41" width="44" height="12" fill="#8aa3b8" /><path d="M6 53c8-8 18-6 22-3 6-3 12-1 22 3z" fill="#54442c" /><path d="M6 43c10 2 20-3 44 3" stroke="#eee" strokeWidth="2" fill="none" /></g>
    <path d="M40 41h24v15c-4 6-20 6-24 0z" fill="#2b2420" /><circle cx="52" cy="38" r="12" fill="#4b565c" stroke="#111" strokeWidth="2.500" /><circle cx="52" cy="38" r="8.500" fill="#86929a" /><path d="M45 41c4-4 10 2 14-2" stroke="#1c2a3a" strokeWidth="3" fill="none" />
  </g>,
  /* Illustrator */
  <g key="ai"><rect x="4" y="5" width="56" height="54" rx="11" fill="#090400" /><text x="32" y="44" fontFamily="Open Sans, sans-serif" fontWeight="700" fontSize="35" textAnchor="middle" fill="#c0600f">Ai</text></g>,
];

const trash = (
  <g>
    <defs><linearGradient id="tr"><stop offset="0" stopColor="#c4c4c4" /><stop offset=".3" stopColor="#a4a4a4" /><stop offset=".7" stopColor="#b5b5b5" /><stop offset="1" stopColor="#d6d6d6" /></linearGradient></defs>
    <path d="M9 8l7-5 6 3 6-5 5 4 8-5 6 4 8 5-4 7H13z" fill="#d9d9d9" />
    <path d="M8 9c8 5 40 5 48 0l-6 48c-5 6-31 6-36 0z" fill="url(#tr)" opacity=".93" />
    <path d="M13 9l8-6 5 7zM27 6l4 6 5-5zM37 7l9-4 6 6-8 3zM19 12h9l4-3 6 3h8l-6 2H24z" fill="#2c2c2c" />
    <path d="M8 8c8 7 40 7 48 0" fill="none" stroke="#e6e6e6" strokeWidth="1.500" />
    <path d="M14 57c5 5 31 5 36 0" fill="none" stroke="#e2e2e2" strokeWidth="2" />
  </g>
);

function Slot({ children, dot = false, badge }: { children: React.ReactNode; dot?: boolean; badge?: string }) {
  return (
    <div className="relative flex w-[72px] shrink-0 flex-col items-center pt-[7px]">
      <svg className="h-[64px] w-[64px] overflow-visible drop-shadow-[0_1px_1px_rgba(0,0,0,0.3)]" viewBox="0 0 64 64">{children}</svg>
      {dot && <span className="mt-[6px] h-[4px] w-[4px] rounded-full bg-black" />}
      {badge && (
        <span className="absolute top-[4px] right-[1px] h-[26px] w-[26px] rounded-full bg-[#a5231b] text-center text-[15px] leading-[26px] text-white">{badge}</span>
      )}
    </div>
  );
}

function Divider() {
  return <div className="mx-[15.500px] mt-[10px] h-[62px] w-px bg-[#333]" />;
}

function Dock() {
  return (
    <nav className="absolute bottom-0 left-[128px] flex h-[84px] w-[2304px] rounded-t-[4px] border border-b-0 border-[#dcdcdc] bg-[#939393] pl-[3px] shadow-[0_0_0_1px_#333]">
      {APPS.map((a, i) => (
        <Slot key={i} dot={i === 0 || i === 8} badge={i === 21 ? "1" : undefined}>{a}</Slot>
      ))}
      <Divider />
      {EXTRAS.map((a, i) => <Slot key={i}>{a}</Slot>)}
      <Divider />
      <Slot>{trash}</Slot>
    </nav>
  );
}

export default function App() {
  return (
    <div className="relative flex h-[1440px] w-[2560px] flex-col overflow-hidden bg-black font-['Inter',sans-serif]">
      <MenuBar />
      <div className="flex flex-1 justify-between">
        <section className="mt-px ml-[151px] flex h-[1332px] w-[2130px] flex-col overflow-hidden rounded-[6px] border-x border-[#d8d8d0] bg-white">
          <TabBar />
          <Toolbar />
          <Page />
        </section>
        <Desktop />
      </div>
      <Dock />
    </div>
  );
}
